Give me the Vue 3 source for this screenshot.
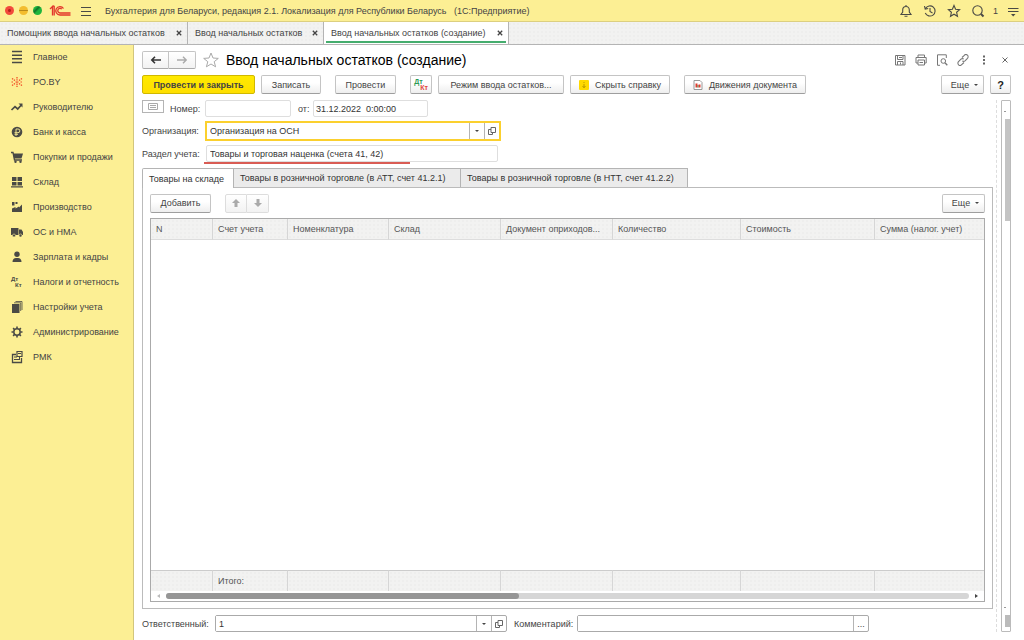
<script setup>
import { ref } from 'vue'

const windowTabs = [
  { title: 'Помощник ввода начальных остатков', size: 'long', active: false },
  { title: 'Ввод начальных остатков', size: 'short', active: false },
  { title: 'Ввод начальных остатков (создание)', size: 'current', active: true },
]

const ink = '#4a4a45'
const sections = [
  { name: 'Главное', icon: `<path d="M3 2.500h10M3 6.200h10M3 9.800h10M3 13.500h10" stroke="${ink}" stroke-width="1.600"/>` },
  { name: 'PO.BY', icon: '<path d="M8 3v10M3 4.500l3 2M13 4.500l-3 2M3 11.500l3-2M13 11.500l-3-2M2.500 8h2M11.500 8h2M6.500 8h3" fill="none" stroke="#f0431f" stroke-width="1.200" stroke-dasharray="1.400 .8"/>' },
  { name: 'Руководителю', icon: `<path d="M2.500 11l3.500-3.300 2.700 2.300 3.600-4" fill="none" stroke="${ink}" stroke-width="1.700"/><path d="M9.500 4.500H13.500v4z" fill="${ink}"/>` },
  { name: 'Банк и касса', icon: `<circle cx="8" cy="8" r="5.300" fill="${ink}"/><path d="M7 12V5h2a1.800 1.800 0 0 1 0 3.700H5.500M5.500 10.300H9" fill="none" stroke="#fcef95" stroke-width=".9"/>` },
  { name: 'Покупки и продажи', icon: `<path d="M2 3.500h2l1.500 7.500H13" fill="none" stroke="${ink}" stroke-width="1.300"/><path d="M4 4.500h10l-1.500 5H5.200z" fill="${ink}"/><circle cx="6.500" cy="12.700" r="1.200" fill="${ink}"/><circle cx="11.500" cy="12.700" r="1.200" fill="${ink}"/>` },
  { name: 'Склад', icon: `<path d="M3 3h4.500v4H3zM8.500 3H13v4H8.500zM3 8h4.500v3.500H3zM8.500 8H13v3.500H8.500zM2 12.300h12v1.200H2z" fill="${ink}"/>` },
  { name: 'Производство', icon: `<path d="M3 13V9.500l3.500-1.500v1.500L10 7.500V8.500L13 5.500V13zM3 3h2.500v3.500H3zM6.500 3h2v2h-2z" fill="${ink}"/>` },
  { name: 'ОС и НМА', icon: `<path d="M2 4h7.500v7H2zM10 5.500h2.500L14 8v3h-4z" fill="${ink}"/><circle cx="5" cy="11.500" r="1.500" fill="${ink}" stroke="#fcef95" stroke-width=".6"/><circle cx="11.500" cy="11.500" r="1.500" fill="${ink}" stroke="#fcef95" stroke-width=".6"/>` },
  { name: 'Зарплата и кадры', icon: `<circle cx="8" cy="5.300" r="2.700" fill="${ink}"/><path d="M3.500 13c0-3 1.500-3.800 3.500-4h2c2 .2 3.500 1 3.500 4z" fill="${ink}"/>` },
  { name: 'Налоги и отчетность', icon: `<g fill="${ink}" font-family="Liberation Sans, sans-serif" font-size="6" font-weight="700"><text x="2" y="7">Дт</text><text x="6" y="13">Кт</text></g>` },
  { name: 'Настройки учета', icon: `<path d="M3 5h7.500v9H3z" fill="${ink}"/><path d="M5 3.800h6.700V12M6.500 2.500H13V11" fill="none" stroke="${ink}" stroke-width=".8"/>` },
  { name: 'Администрирование', icon: `<circle cx="8" cy="8" r="3.200" fill="none" stroke="${ink}" stroke-width="1.500"/><path d="M8 2.500v2M8 11.500v2M2.500 8h2M11.500 8h2M4.100 4.100l1.400 1.400M10.500 10.500l1.400 1.400M4.100 11.900l1.400-1.400M10.500 5.500l1.400-1.400" stroke="${ink}" stroke-width="1.600"/>` },
  { name: 'РМК', icon: `<path d="M7 5.500H3.500v8h9V9" fill="none" stroke="${ink}" stroke-width="1.300"/><path d="M8 2.500h5v5H8z" fill="none" stroke="${ink}" stroke-width="1.200"/><path d="M9 4.500h3M5 8h3M5 10.500h6M10.500 8v2" stroke="${ink}"/>` },
]

const bookTabs = [
  { title: 'Товары на складе', size: 'small' },
  { title: 'Товары в розничной торговле (в АТТ, счет 41.2.1)', size: 'big' },
  { title: 'Товары в розничной торговле (в НТТ, счет 41.2.2)', size: 'big' },
]
const columns = [
  { title: 'N', cls: 'c-n' },
  { title: 'Счет учета', cls: 'c-account' },
  { title: 'Номенклатура', cls: 'c-item' },
  { title: 'Склад', cls: 'c-store' },
  { title: 'Документ оприходов...', cls: 'c-doc' },
  { title: 'Количество', cls: 'c-qty' },
  { title: 'Стоимость', cls: 'c-cost' },
  { title: 'Сумма (налог. учет)', cls: 'c-sum' },
]

const number = ref('')
const date = ref('31.12.2022  0:00:00')
const organization = ref('Организация на ОСН')
const section = ref('Товары и торговая наценка (счета 41, 42)')
const responsible = ref('1')
const comment = ref('')
</script>

<template>
  <div class="app">
    <header class="titlebar">
      <div class="lights">
        <button class="light red" aria-label="Закрыть"></button>
        <button class="light amber" aria-label="Свернуть"></button>
        <button class="light green" aria-label="Развернуть"></button>
      </div>
      <svg class="logo" viewBox="0 0 22 12" fill="none" stroke="#e2362b" stroke-width="1.300">
        <path d="M1 4l2.500-2.500V10.500M5.200 10.500V.800M3.500 1.500L5 .800" />
        <path d="M14.500 3.500A4.200 4.200 0 1 0 11 10h10.500M12.800 4.200A2.300 2.300 0 1 0 11 8h10.500" />
      </svg>
      <button class="flat burger" aria-label="Меню">
        <svg viewBox="0 0 12 10" stroke="#4a4a45"><path d="M1 1.500h10M1 5.500h10M1 9.500h10" /></svg>
      </button>
      <span class="app-title">Бухгалтерия для Беларуси, редакция 2.1. Локализация для Республики Беларусь&nbsp;&nbsp; (1С:Предприятие)</span>
      <div class="title-tools">
        <button class="flat" aria-label="Уведомления">
          <svg viewBox="0 0 14 14" fill="none" stroke="#4a4a45" stroke-width="1.100"><path d="M2 10.500h10L10.300 8V6c0-2-1.200-3.500-3.300-3.500S3.700 4 3.700 6v2zM7 1v1.500M5.500 12.200h3" /></svg>
        </button>
        <button class="flat" aria-label="История">
          <svg viewBox="0 0 14 14" fill="none" stroke="#4a4a45" stroke-width="1.100"><path d="M2.500 4.500A5.100 5.100 0 1 1 2.300 9M1.500 2l.7 3.200 3-.7M7 4v3.500l2.500 1.500" /></svg>
        </button>
        <button class="flat" aria-label="Избранное">
          <svg viewBox="0 0 14 14" fill="none" stroke="#4a4a45" stroke-width="1.100"><path d="M7 1.500l1.600 3.700 4 .4-3 2.700.9 4L7 10.200l-3.500 2.100.9-4-3-2.700 4-.4z" /></svg>
        </button>
        <button class="flat" aria-label="Поиск">
          <svg viewBox="0 0 14 14" fill="none" stroke="#4a4a45" stroke-width="1.100"><circle cx="6.500" cy="6.500" r="4.700" /><path d="M10 10l2.500 2.500" stroke-width="2" /></svg>
        </button>
        <span class="count">1</span>
        <button class="flat" aria-label="Настройки окна">
          <svg viewBox="0 0 14 14" stroke="#4a4a45"><path d="M2 4.500h10.500M2 7.500h10.500" /><path d="M5 10h4.500L7.200 12.500z" fill="#4a4a45" stroke="none" /></svg>
        </button>
      </div>
    </header>

    <nav class="window-tabs dotted" aria-label="Открытые окна">
      <div v-for="t in windowTabs" :key="t.title" class="window-tab" :class="[t.size, { active: t.active }]">
        <a href="#">{{ t.title }}</a>
        <button class="flat close" aria-label="Закрыть вкладку">
          <svg viewBox="0 0 6 6" stroke="#444" stroke-width="1.300"><path d="M.8.8l4.400 4.400M5.200.8L.8 5.200" /></svg>
        </button>
      </div>
    </nav>

    <div class="workspace">
      <nav class="sidebar" aria-label="Разделы">
        <a v-for="s in sections" :key="s.name" href="#">
          <svg viewBox="0 0 16 16" v-html="s.icon"></svg>
          <span>{{ s.name }}</span>
        </a>
      </nav>

      <main>
        <div class="heading">
          <div class="pair history">
            <button aria-label="Назад"><svg viewBox="0 0 12 10" fill="none" stroke="#333" stroke-width="1.600"><path d="M11 5H2M5 1.800L1.800 5 5 8.200" /></svg></button>
            <button aria-label="Вперед"><svg viewBox="0 0 12 10" fill="none" stroke="#aaa" stroke-width="1.400"><path d="M1 5h9M7 1.800L10.200 5 7 8.200" /></svg></button>
          </div>
          <button class="flat star" aria-label="В избранное">
            <svg viewBox="0 0 16 16" fill="none" stroke="#aaa"><path d="M8 1l2 5 5.300.4-4.100 3.300 1.400 5.100L8 12l-4.600 2.800 1.400-5.100L.7 6.400 6 6z" /></svg>
          </button>
          <h1>Ввод начальных остатков (создание)</h1>
          <div class="form-tools">
            <button class="flat" aria-label="Сохранить"><svg viewBox="0 0 12 12" fill="none" stroke="#777"><path d="M1.500 1.500h9.500v9.500H1.500zM3.500 1.500v4h5.500v-4M3.500 11V7.500h5.500V11M5 3.500h3M6.500 8.500v2" /></svg></button>
            <button class="flat" aria-label="Печать"><svg viewBox="0 0 12 12" fill="none" stroke="#777"><path d="M3 3.500V1h6.500v2.500M3 9H1V3.500h10.200V9H9.500M3 6h6.500v5H3zM4.500 8.500h3.500" /></svg></button>
            <button class="flat" aria-label="Просмотр"><svg viewBox="0 0 12 12" fill="none" stroke="#777"><path d="M4 11.300H1.500V.8h8.800V4" /><circle cx="7.300" cy="7" r="2.300" /><path d="M9 8.800l2.300 2.500" stroke-width="1.300" /></svg></button>
            <button class="flat" aria-label="Ссылка"><svg viewBox="0 0 12 12" fill="none" stroke="#777" stroke-width="1.100"><path d="M5 3.500L7.300 1.300a2 2 0 0 1 3.200 3L8 6.800a2 2 0 0 1-2.700 0M7 8.500l-2.300 2.200a2 2 0 0 1-3.200-3L4 5.200a2 2 0 0 1 2.700 0" /></svg></button>
            <button class="flat" aria-label="Еще"><svg viewBox="0 0 12 12" fill="#666"><path d="M5 1.500h2v2H5zM5 5h2v2H5zM5 8.500h2v2H5z" /></svg></button>
            <button class="flat" aria-label="Закрыть"><svg viewBox="0 0 12 12" stroke="#666"><path d="M3.500 3.500l5 5M8.500 3.500l-5 5" /></svg></button>
          </div>
        </div>

        <div class="commands">
          <button class="btn primary">Провести и закрыть</button>
          <button class="btn save">Записать</button>
          <button class="btn post">Провести</button>
          <button class="btn dtkt" aria-label="Дт Кт"><span class="dt">Дт</span><span class="kt">Кт</span></button>
          <button class="btn mode">Режим ввода остатков...</button>
          <button class="btn help-toggle">
            <svg viewBox="0 0 10 10"><rect width="10" height="10" rx="1" fill="#ffd900" /><path d="M5 2v1M5 4v3.500M3.500 6L5 7.800 6.500 6" fill="none" stroke="#a88c00" stroke-width=".8" /></svg>
            Скрыть справку
          </button>
          <button class="btn moves">
            <svg viewBox="0 0 10 10"><path d="M1 .5h6l2 2v7H1z" fill="#fff" stroke="#999" /><path d="M2.500 3.500h2v4h-2z" fill="#e03a2e" /><path d="M4.500 5h1v2.500h-1z" fill="#2a9a55" /><path d="M5.500 4.500h2v3h-2z" fill="#e03a2e" /></svg>
            Движения документа
          </button>
          <span class="spring"></span>
          <button class="btn more">Еще <i class="caret"></i></button>
          <button class="btn question">?</button>
        </div>

        <div class="form-body">
          <form class="form" @submit.prevent>
            <div class="line number-line">
              <button class="status" aria-label="Состояние"><svg viewBox="0 0 10 8" fill="none" stroke="#aaa"><path d="M.5.500h9v6h-9zM2 2.500h6M2 4.500h6" /></svg></button>
              <label for="number" class="number-label">Номер:</label>
              <input id="number" v-model="number" class="soft number" />
              <label for="date" class="date-label">от:</label>
              <input id="date" v-model="date" class="soft date" />
            </div>
            <div class="line org-line">
              <label for="org" class="wide">Организация:</label>
              <div class="combo focus">
                <input id="org" v-model="organization" />
                <button aria-label="Выбрать"><i class="caret"></i></button>
                <button aria-label="Открыть"><svg viewBox="0 0 8 8" fill="none" stroke="#666"><path d="M3 .5h4.500v5H3zM3 2.500H.500v5h4v-2" /></svg></button>
              </div>
            </div>
            <div class="line section-line">
              <label for="section" class="wide">Раздел учета:</label>
              <input id="section" v-model="section" class="soft section" />
              <span class="mark"></span>
            </div>

            <div class="book-tabs" role="tablist">
              <button v-for="(t, i) in bookTabs" :key="t.title" role="tab" :aria-selected="i === 0" :class="[t.size, { active: i === 0 }]">{{ t.title }}</button>
            </div>
            <section class="panel">
              <div class="table-bar">
                <button class="btn add">Добавить</button>
                <div class="pair order">
                  <button aria-label="Вверх"><svg viewBox="0 0 10 10" fill="#aaa"><path d="M5 1l4 4H6.500v4h-3V5H1z" /></svg></button>
                  <button aria-label="Вниз"><svg viewBox="0 0 10 10" fill="#aaa"><path d="M5 9L1 5h2.500V1h3v4H9z" /></svg></button>
                </div>
                <span class="spring"></span>
                <button class="btn more">Еще <i class="caret"></i></button>
              </div>
              <div class="grid">
                <div class="table-area">
                  <table>
                    <thead>
                      <tr><th v-for="c in columns" :key="c.title" :class="c.cls" scope="col" class="dotted">{{ c.title }}</th></tr>
                    </thead>
                    <tbody><tr><td :colspan="columns.length"></td></tr></tbody>
                    <tfoot>
                      <tr><td v-for="(c, i) in columns" :key="c.title" class="dotted">{{ i === 1 ? 'Итого:' : '' }}</td></tr>
                    </tfoot>
                  </table>
                </div>
                <div class="hscroll">
                  <i class="tri left"></i>
                  <div class="track"><div class="thumb"></div></div>
                  <i class="tri right"></i>
                </div>
              </div>
            </section>

            <div class="footer">
              <label for="resp" class="resp-label">Ответственный:</label>
              <div class="combo resp">
                <input id="resp" v-model="responsible" />
                <button aria-label="Выбрать"><i class="caret"></i></button>
                <button aria-label="Открыть"><svg viewBox="0 0 8 8" fill="none" stroke="#666"><path d="M3 .5h4.500v5H3zM3 2.500H.500v5h4v-2" /></svg></button>
              </div>
              <label for="comment" class="comment-label">Комментарий:</label>
              <div class="combo comment">
                <input id="comment" v-model="comment" />
                <button aria-label="Редактировать комментарий">...</button>
              </div>
            </div>
          </form>
          <div class="vscroll">
            <i class="dot"></i>
            <div class="vthumb"></div>
            <span class="spring"></span>
            <i class="dot"></i>
            <div class="vend"></div>
          </div>
        </div>
      </main>
    </div>
  </div>
</template>

<style>
body { background: #fff; }
</style>

<style scoped>
* { box-sizing: border-box; }
.app {
  display: flex;
  flex-direction: column;
  height: 100vh;
  font: 9px/12px "Liberation Sans", Arial, sans-serif;
  color: #444;
}
button, input { font: inherit; color: inherit; margin: 0; }
button { padding: 0; white-space: nowrap; }
a { color: inherit; text-decoration: none; }
svg { display: block; flex: none; }
.spring { flex: 1; }
.flat { border: 0; background: none; }
.dotted {
  background-color: #f2f2f1;
  background-image: radial-gradient(#eeeeed 1px, transparent 1px);
  background-size: 4px 4px;
}

.titlebar {
  display: flex;
  align-items: center;
  flex: none;
  height: 22px;
  padding: 0 4px 0 5px;
  background: #fcef94;
  border-bottom: 1px solid #dccf80;
}
.lights { display: flex; gap: 5px; }
.light { width: 9px; height: 9px; border: 0; border-radius: 50%; }
.red { background: radial-gradient(#b3261c 1px, #f24a3c 2px); }
.amber { background: linear-gradient(#f3bd2e 4px, #b98a1a 4px, #b98a1a 5px, #f3bd2e 5px); }
.green { background: linear-gradient(135deg, #1fb53c 3px, #12732a 5px, #1fb53c 7px); }
.logo { width: 22px; height: 12px; margin-left: 7px; }
.burger { margin-left: 9px; }
.burger svg { width: 12px; height: 10px; }
.app-title { margin-left: 13px; white-space: nowrap; }
.title-tools { display: flex; align-items: center; gap: 10px; margin-left: auto; }
.title-tools svg { width: 14px; height: 14px; }
.count { margin: 0 -2px; }

.window-tabs {
  display: flex;
  flex: none;
  height: 23px;
  border-bottom: 1px solid #b4b4b4;
}
.window-tab {
  display: flex;
  align-items: center;
  justify-content: space-between;
  padding: 0 5px 0 7px;
  border-right: 1px solid #b4b4b4;
  white-space: nowrap;
}
.window-tab.long { min-width: 188px; }
.window-tab.short { min-width: 136px; }
.window-tab.current { min-width: 185px; }
.window-tab.active { position: relative; background: #fff; }
.window-tab.active::after {
  content: "";
  position: absolute;
  left: 2px;
  right: 2px;
  bottom: 1px;
  height: 2px;
  background: #45ad6e;
}
.close svg { width: 6px; height: 6px; }

.workspace { display: flex; flex: 1; min-height: 0; }
.sidebar {
  flex: none;
  width: 134px;
  background: #fcef94;
  border-right: 1px solid #d2c67d;
}
.sidebar a {
  display: flex;
  align-items: center;
  gap: 8px;
  height: 25px;
  padding: 0 0 2px 9px;
  white-space: nowrap;
}
.sidebar svg { width: 16px; height: 16px; }
main {
  display: flex;
  flex-direction: column;
  flex: 1;
  min-width: 0;
  padding: 5px 13px 8px 8px;
}

.heading { display: flex; align-items: center; height: 19px; }
.pair { display: flex; }
.pair button {
  display: grid;
  place-items: center;
  border: 1px solid #c4c4c4;
  border-bottom-color: #aaa;
  background: linear-gradient(#fff, #f2f2f2);
}
.pair button:first-child { border-radius: 2px 0 0 2px; }
.pair button:last-child { border-left: 0; border-radius: 0 2px 2px 0; }
.history button { width: 27px; height: 18px; }
.history svg { width: 12px; height: 10px; }
.star { margin-left: 7px; }
.star svg { width: 16px; height: 16px; }
h1 { margin: 0 0 0 7px; font-size: 14px; line-height: 18px; font-weight: 400; color: #000; white-space: nowrap; }
.form-tools { display: flex; gap: 9px; margin-left: auto; }
.form-tools svg { width: 12px; height: 12px; }

.commands { display: flex; align-items: center; margin: 6px 0; }
.btn {
  display: flex;
  align-items: center;
  justify-content: center;
  flex: none;
  height: 19px;
  border: 1px solid #c4c4c4;
  border-bottom-color: #9e9e9e;
  border-radius: 2px;
  background: linear-gradient(#fff 40%, #eee);
}
.primary { width: 113px; border-color: #d0b800; background: linear-gradient(#ffea00, #ffdf00); font-weight: 700; }
.save { width: 60px; margin-left: 6px; }
.post { width: 61px; margin-left: 14px; }
.dtkt { width: 22px; margin-left: 14px; font-size: 7px; line-height: 6px; font-weight: 700; flex-direction: column; }
.dt { color: #2a9a55; margin-right: 5px; }
.kt { color: #e2483c; margin-left: 6px; }
.mode { width: 126px; margin-left: 6px; }
.help-toggle { width: 100px; margin-left: 6px; gap: 6px; }
.moves { width: 122px; margin-left: 14px; gap: 6px; }
.btn svg { width: 10px; height: 10px; }
.more { width: 43px; gap: 5px; padding-left: 4px; }
.question { width: 21px; margin-left: 6px; font-size: 11px; font-weight: 700; color: #222; }
.caret { width: 0; height: 0; border: 2px solid transparent; border-top: 2px solid #444; border-bottom: 0; }

.form-body { display: flex; flex: 1; min-height: 0; }
.form { display: flex; flex-direction: column; flex: 1; min-width: 0; padding-right: 3px; border-right: 1px dashed #ddd; }
.line { display: flex; align-items: center; position: relative; }
.wide { width: 63px; white-space: nowrap; }
input { min-width: 0; padding: 0 4px; border: 0; outline: 0; background: #fff; color: #333; white-space: pre; }
.soft { height: 17px; border: 1px solid #dedede; border-radius: 2px; }
.status { display: grid; place-items: center; align-self: flex-start; width: 22px; height: 13px; margin-right: 6px; border: 1px solid #b4b4b4; background: #fff; }
.status svg { width: 10px; height: 8px; }
.number-line { height: 17px; }
.number-label { width: 35px; }
.number { width: 86px; }
.date-label { width: 15px; margin-left: 7px; }
.date { width: 115px; padding: 0 2px; }
.org-line { margin-top: 4px; }
.combo { display: flex; height: 17px; border: 1px solid #aaa; border-radius: 2px; background: #fff; }
.combo input { flex: 1; padding: 0 3px; }
.combo button { display: grid; place-items: center; width: 15px; border: 0; border-left: 1px solid #b4b4b4; background: none; }
.combo svg { width: 8px; height: 8px; }
.focus { width: 296px; height: 20px; border: 2px solid #fbd02e; border-radius: 0; }
.section-line { height: 17px; margin-top: 4px; }
.section { width: 292px; margin-left: 1px; padding: 0 3px; }
.mark { position: absolute; left: 62px; bottom: -2px; width: 206px; height: 2px; background: #d95c54; }

.book-tabs { display: flex; flex: none; height: 19px; margin-top: 6px; }
.book-tabs button { padding: 0 6px; border: 1px solid #b4b4b4; border-left: 0; border-bottom: 0; background: #ebebeb; color: #333; text-align: left; }
.book-tabs .small { min-width: 92px; }
.book-tabs .big { min-width: 227px; }
.book-tabs .active { border-left: 1px solid #b4b4b4; background: #fff; border-radius: 2px 0 0 0; position: relative; height: 20px; }
.panel { display: flex; flex-direction: column; flex: 1; min-height: 0; padding: 5px 7px 6px 7px; border: 1px solid #bbb; }
.table-bar { display: flex; align-items: center; height: 20px; }
.add { width: 61px; }
.order { margin-left: 14px; }
.order button { width: 22px; height: 19px; border-color: #ddd; }
.order svg { width: 10px; height: 10px; }
.grid { display: flex; flex-direction: column; flex: 1; min-height: 0; margin-top: 5px; border: 1px solid #aaa; }
.table-area { flex: 1; min-height: 0; }
table { width: 100%; height: 100%; table-layout: fixed; border-collapse: separate; border-spacing: 0; }
th, tfoot td { height: 21px; padding: 0 5px; border-right: 1px solid #d6d6d6; text-align: left; font-weight: 400; white-space: nowrap; color: #555; }
th { border-bottom: 1px solid #ddd; }
tfoot td { border-top: 1px solid #ccc; }
th:last-child, tfoot td:last-child { border-right: 0; }
tbody td { padding: 0; }
.c-n { width: 62px; }
.c-account { width: 75px; }
.c-item { width: 101px; }
.c-store { width: 112px; }
.c-doc { width: 112px; }
.c-qty { width: 128px; }
.c-cost { width: 134px; }
.hscroll { display: flex; align-items: center; justify-content: space-between; height: 10px; padding: 0 6px; }
.track { flex: 1; height: 6px; margin: 0 6px; border-radius: 3px; background: #d6d6d6; }
.thumb { width: 44%; height: 6px; border-radius: 3px; background: #969696; }
.tri { width: 0; height: 0; border: 2px solid transparent; }
.left { border-right: 3px solid #bbb; border-left: 0; }
.right { border-left: 3px solid #444; border-right: 0; }

.footer { display: flex; align-items: center; flex: none; margin-top: 6px; white-space: nowrap; }
.resp-label { width: 73px; }
.resp { width: 292px; margin-right: 7px; }
.comment-label { width: 63px; }
.comment { width: 292px; }
.vscroll { display: flex; flex-direction: column; align-items: flex-end; width: 10px; margin-left: 4px; border: 1px solid #bbb; border-radius: 1px; }
.vscroll .dot { width: 2px; height: 1px; margin: 10px 4px 7px 0; background: #999; }
.vthumb { width: 5px; height: 102px; background: #c4c4c4; }
.vend { width: 5px; height: 12px; margin-bottom: 4px; background: #bbb; }
</style>
